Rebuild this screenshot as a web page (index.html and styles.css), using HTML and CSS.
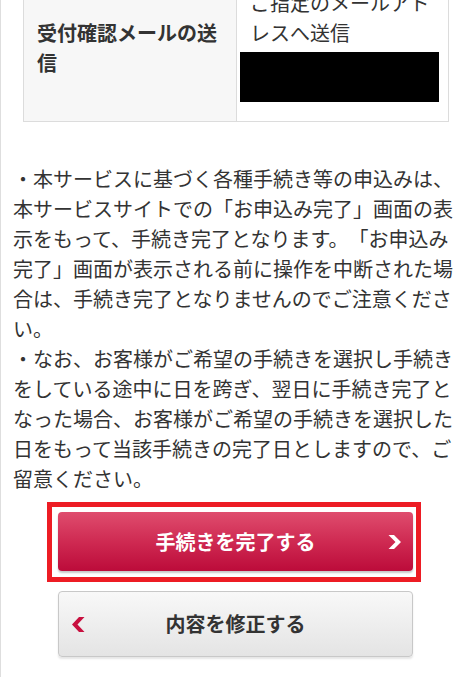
FILE: index.html
```html
<!DOCTYPE html>
<html lang="ja">
<head>
<meta charset="utf-8">
<title>手続き確認</title>
<link rel="stylesheet" href="styles.css">
</head>
<body>
<div class="page">
  <div class="info">
    <div class="info-label">受付確認メールの送信</div>
    <div class="info-value">
      <p class="info-text">ご指定のメールアドレスへ送信</p>
      <div class="redacted"></div>
    </div>
  </div>

  <div class="notice">
    <p>・本サービスに基づく各種手続き等の申込みは、本サービスサイトでの「お申込み完了」画面の表示をもって、手続き完了となります。「お申込み完了」画面が表示される前に操作を中断された場合は、手続き完了となりませんのでご注意ください。</p>
    <p>・なお、お客様がご希望の手続きを選択し手続きをしている途中に日を跨ぎ、翌日に手続き完了となった場合、お客様がご希望の手続きを選択した日をもって当該手続きの完了日としますので、ご留意ください。</p>
  </div>

  <div class="actions">
    <div class="highlight">
      <a class="btn btn-primary" href="#">
        <span></span>
        <span class="btn-label">手続きを完了する</span>
        <svg class="chev chev-right" width="13" height="14" viewBox="0 0 13 14"><path d="M0.5 0 L6 0 L13 7 L6 14 L0.5 14 L7.5 7 Z" fill="#fff"/></svg>
      </a>
    </div>
    <a class="btn btn-secondary" href="#">
      <svg class="chev chev-left" width="13" height="15" viewBox="0 0 13 15"><path d="M12.5 0 L7 0 L0 7.5 L7 15 L12.5 15 L5.5 7.5 Z" fill="#c8103f"/></svg>
      <span class="btn-label">内容を修正する</span>
      <span></span>
    </a>
  </div>
</div>
</body>
</html>
```
FILE: styles.css
```css
html, body {
  margin: 0;
  padding: 0;
  background: #fff;
}
body {
  font-family: "Noto Sans CJK JP", "Noto Sans", sans-serif;
  color: #333;
  font-size: 20px;
  line-height: 30px;
  overflow: hidden;
  text-spacing-trim: space-all;
}
.page {
  border-left: 1px solid #dedede;
  padding: 0 12px;
  min-height: calc(100vh + 26px);
  box-sizing: border-box;
}
.info {
  display: grid;
  grid-template-columns: 213px 1fr;
  width: 426px;
  box-sizing: border-box;
  margin: -26px 0 0 10px;
  border: 1px solid #dcdcdc;
}
.info-label {
  background: #f7f7f7;
  border-right: 1px solid #dcdcdc;
  padding: 0 13px;
  font-weight: bold;
  display: flex;
  align-items: center;
}
.info-value {
  padding: 13px 13px;
}
.info-text {
  margin: 0;
}
.redacted {
  background: #000;
  width: 199px;
  height: 50px;
  margin: 4px 0 6px -10px;
}
.notice {
  margin-top: 42px;
  width: 443px;
}
.notice p {
  margin: 0;
}
.actions {
  margin-top: 8px;
  padding-left: 34px;
  display: flex;
  flex-direction: column;
  align-items: flex-start;
  gap: 9px;
}
.highlight {
  width: 374px;
  box-sizing: border-box;
  border: 5px solid #ed1c24;
  padding: 5px 3px 6px 6px;
}
.btn {
  display: grid;
  grid-template-columns: 1fr auto 1fr;
  align-items: center;
  width: 355px;
  box-sizing: border-box;
  border-radius: 4px;
  text-decoration: none;
  font-weight: bold;
  font-size: 20px;
}
.btn-primary {
  height: 59px;
  color: #fff;
  background: linear-gradient(to bottom, #df4d6e 0%, #cf2a52 50%, #bc0b3a 100%);
  box-shadow: 0 2px 2px rgba(0, 0, 0, 0.22);
}
.btn-secondary {
  height: 66px;
  margin-left: 11px;
  color: #333;
  border: 1px solid #c8c8c8;
  background: linear-gradient(to bottom, #f8f8f8 0%, #e4e4e4 100%);
  box-shadow: 0 2px 2px rgba(0, 0, 0, 0.1);
}
.btn-label {
  text-align: center;
}
.chev-right {
  justify-self: end;
  margin-right: 12px;
}
.chev-left {
  justify-self: start;
  margin-left: 13px;
}
```
